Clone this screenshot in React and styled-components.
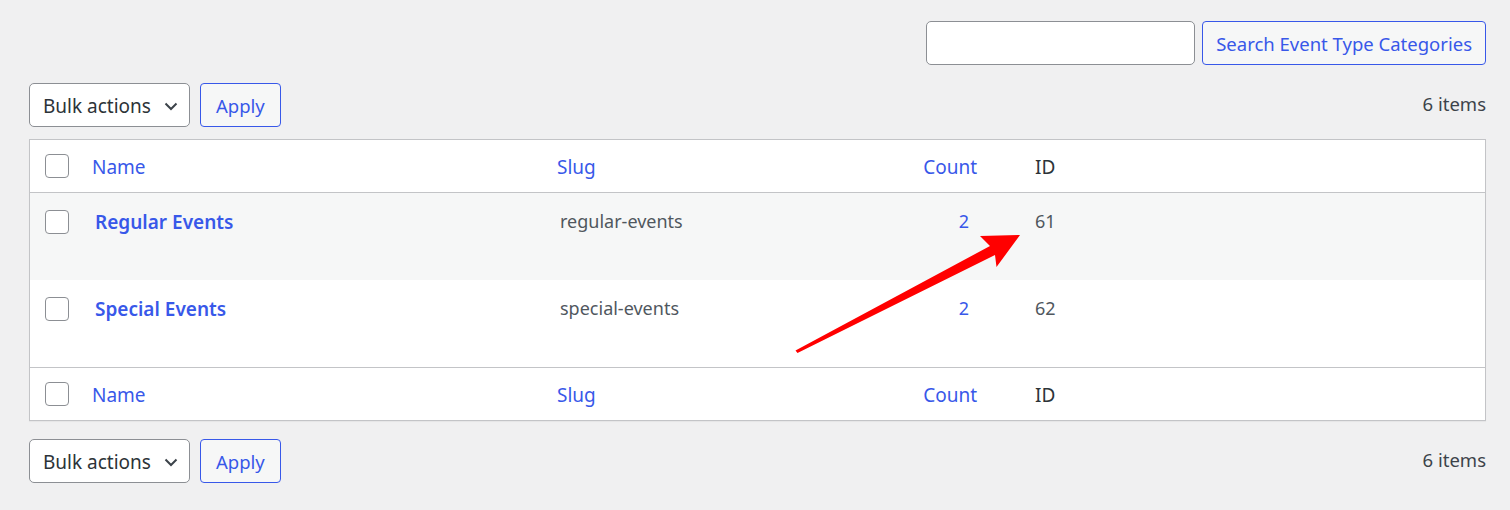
import React from 'react'
import styled, { createGlobalStyle } from 'styled-components'

const GlobalStyle = createGlobalStyle`
  html, body {
    margin: 0;
    padding: 0;
    background: #f0f0f1;
    font-family: "Noto Sans", "Open Sans", sans-serif;
    color: #3c434a;
  }
`

const rows = [
  { name: 'Regular Events', slug: 'regular-events', count: 2, id: 61, alt: true },
  { name: 'Special Events', slug: 'special-events', count: 2, id: 62, alt: false },
]

const Checkbox = () => <Box />

const HeadRow = ({ footer }) => (
  <HeaderRow footer={footer}>
    <CheckCell><Checkbox /></CheckCell>
    <HeadCell><HeadLink>Name</HeadLink></HeadCell>
    <HeadCell><HeadLink>Slug</HeadLink></HeadCell>
    <HeadCell align="right" pr={48}><HeadLink>Count</HeadLink></HeadCell>
    <HeadCell>ID</HeadCell>
  </HeaderRow>
)

const Toolbar = ({ bottom }) => (
  <Bar bottom={bottom}>
    <Actions>
      <Select>
        Bulk actions
        <svg width="16" height="16" viewBox="0 0 16 16">
          <path d="M2.5 5.5 L8 11 L13.5 5.5" fill="none" stroke="#3c434a" strokeWidth="2" />
        </svg>
      </Select>
      <Button>Apply</Button>
    </Actions>
    <Count>6 items</Count>
  </Bar>
)

const App = () => (
  <>
    <GlobalStyle />
    <Page>
      <SearchBox>
        <Input />
        <Button wide>Search Event Type Categories</Button>
      </SearchBox>
      <Toolbar />
      <Table>
        <HeadRow />
        {rows.map(r => (
          <BodyRow key={r.id} alt={r.alt}>
            <CheckCell><Checkbox /></CheckCell>
            <Cell pl={13}><RowTitle>{r.name}</RowTitle></Cell>
            <Cell pl={13}>{r.slug}</Cell>
            <Cell align="right" pr={56}><CountLink>{r.count}</CountLink></Cell>
            <Cell>{r.id}</Cell>
          </BodyRow>
        ))}
        <HeadRow footer />
      </Table>
      <Toolbar bottom />
      <Arrow width="1510" height="510" viewBox="0 0 1510 510">
        <polygon points="795.5,350.5 797.5,353 995,255 996.5,267 1020,235 980,236 990,246" fill="#ff0000" />
      </Arrow>
    </Page>
  </>
)

const Page = styled.div`
  position: relative;
  width: 1510px;
  height: 510px;
  padding: 21px 24px 0 29px;
  box-sizing: border-box;
`
const SearchBox = styled.div`
  display: flex;
  justify-content: flex-end;
  gap: 7px;
  height: 44px;
`
const Input = styled.div`
  width: 267px;
  height: 42px;
  background: #fff;
  border: 1px solid #8c8f94;
  border-radius: 5px;
`
const Button = styled.div`
  display: flex;
  align-items: center;
  justify-content: center;
  box-sizing: border-box;
  height: 44px;
  padding: 1px ${p => (p.wide ? 13 : 15)}px 0;
  background: #f6f7f7;
  border: 1px solid #3858e9;
  border-radius: 4px;
  color: #3858e9;
  font-size: 18.5px;
`
const Bar = styled.div`
  display: flex;
  justify-content: space-between;
  align-items: center;
  margin: ${p => (p.bottom ? '18px 0 0' : '18px 0 12px')};
`
const Actions = styled.div`
  display: flex;
  gap: 10px;
`
const Select = styled.div`
  display: flex;
  align-items: center;
  justify-content: space-between;
  box-sizing: border-box;
  width: 161px;
  height: 44px;
  padding: 2px 10px 0 13px;
  background: #fff;
  border: 1px solid #8c8f94;
  border-radius: 5px;
  color: #2c3338;
  font-size: 19px;
`
const Count = styled.div`
  font-size: 18.5px;
  color: #3c434a;
  padding-bottom: 4px;
`
const Table = styled.div`
  background: #fff;
  border: 1px solid #c3c4c7;
  box-shadow: 0 1px 1px rgba(0, 0, 0, 0.04);
`
const grid = `
  display: grid;
  grid-template-columns: 52px 465px 360px 118px 1fr;
  box-sizing: border-box;
`
const HeaderRow = styled.div`
  ${grid}
  height: 53px;
  align-items: center;
  border-${p => (p.footer ? 'top' : 'bottom')}: 1px solid #c3c4c7;
  font-size: 19px;
`
const BodyRow = styled.div`
  ${grid}
  height: 87px;
  align-items: start;
  background: ${p => (p.alt ? '#f6f7f7' : '#fff')};
  font-size: 18px;
`
const CheckCell = styled.div`
  display: flex;
  padding-left: 15px;
  align-self: center;
  ${BodyRow} & {
    align-self: start;
    padding-top: 17px;
  }
`
const Box = styled.div`
  width: 22px;
  height: 22px;
  border: 1px solid #8c8f94;
  border-radius: 4px;
  background: #fff;
`
const HeadCell = styled.div`
  padding: 2px ${p => p.pr || 10}px 0 10px;
  text-align: ${p => p.align || 'left'};
  color: #2c3338;
`
const HeadLink = styled.span`
  color: #3858e9;
`
const Cell = styled.div`
  padding: 16px ${p => p.pr || 10}px 0 ${p => p.pl || 10}px;
  text-align: ${p => p.align || 'left'};
  color: #50575e;
`
const RowTitle = styled.span`
  color: #3858e9;
  font-weight: 600;
  font-size: 19px;
`
const CountLink = styled.span`
  color: #3858e9;
`
const Arrow = styled.svg`
  position: absolute;
  left: 0;
  top: 0;
  pointer-events: none;
`

export default App
